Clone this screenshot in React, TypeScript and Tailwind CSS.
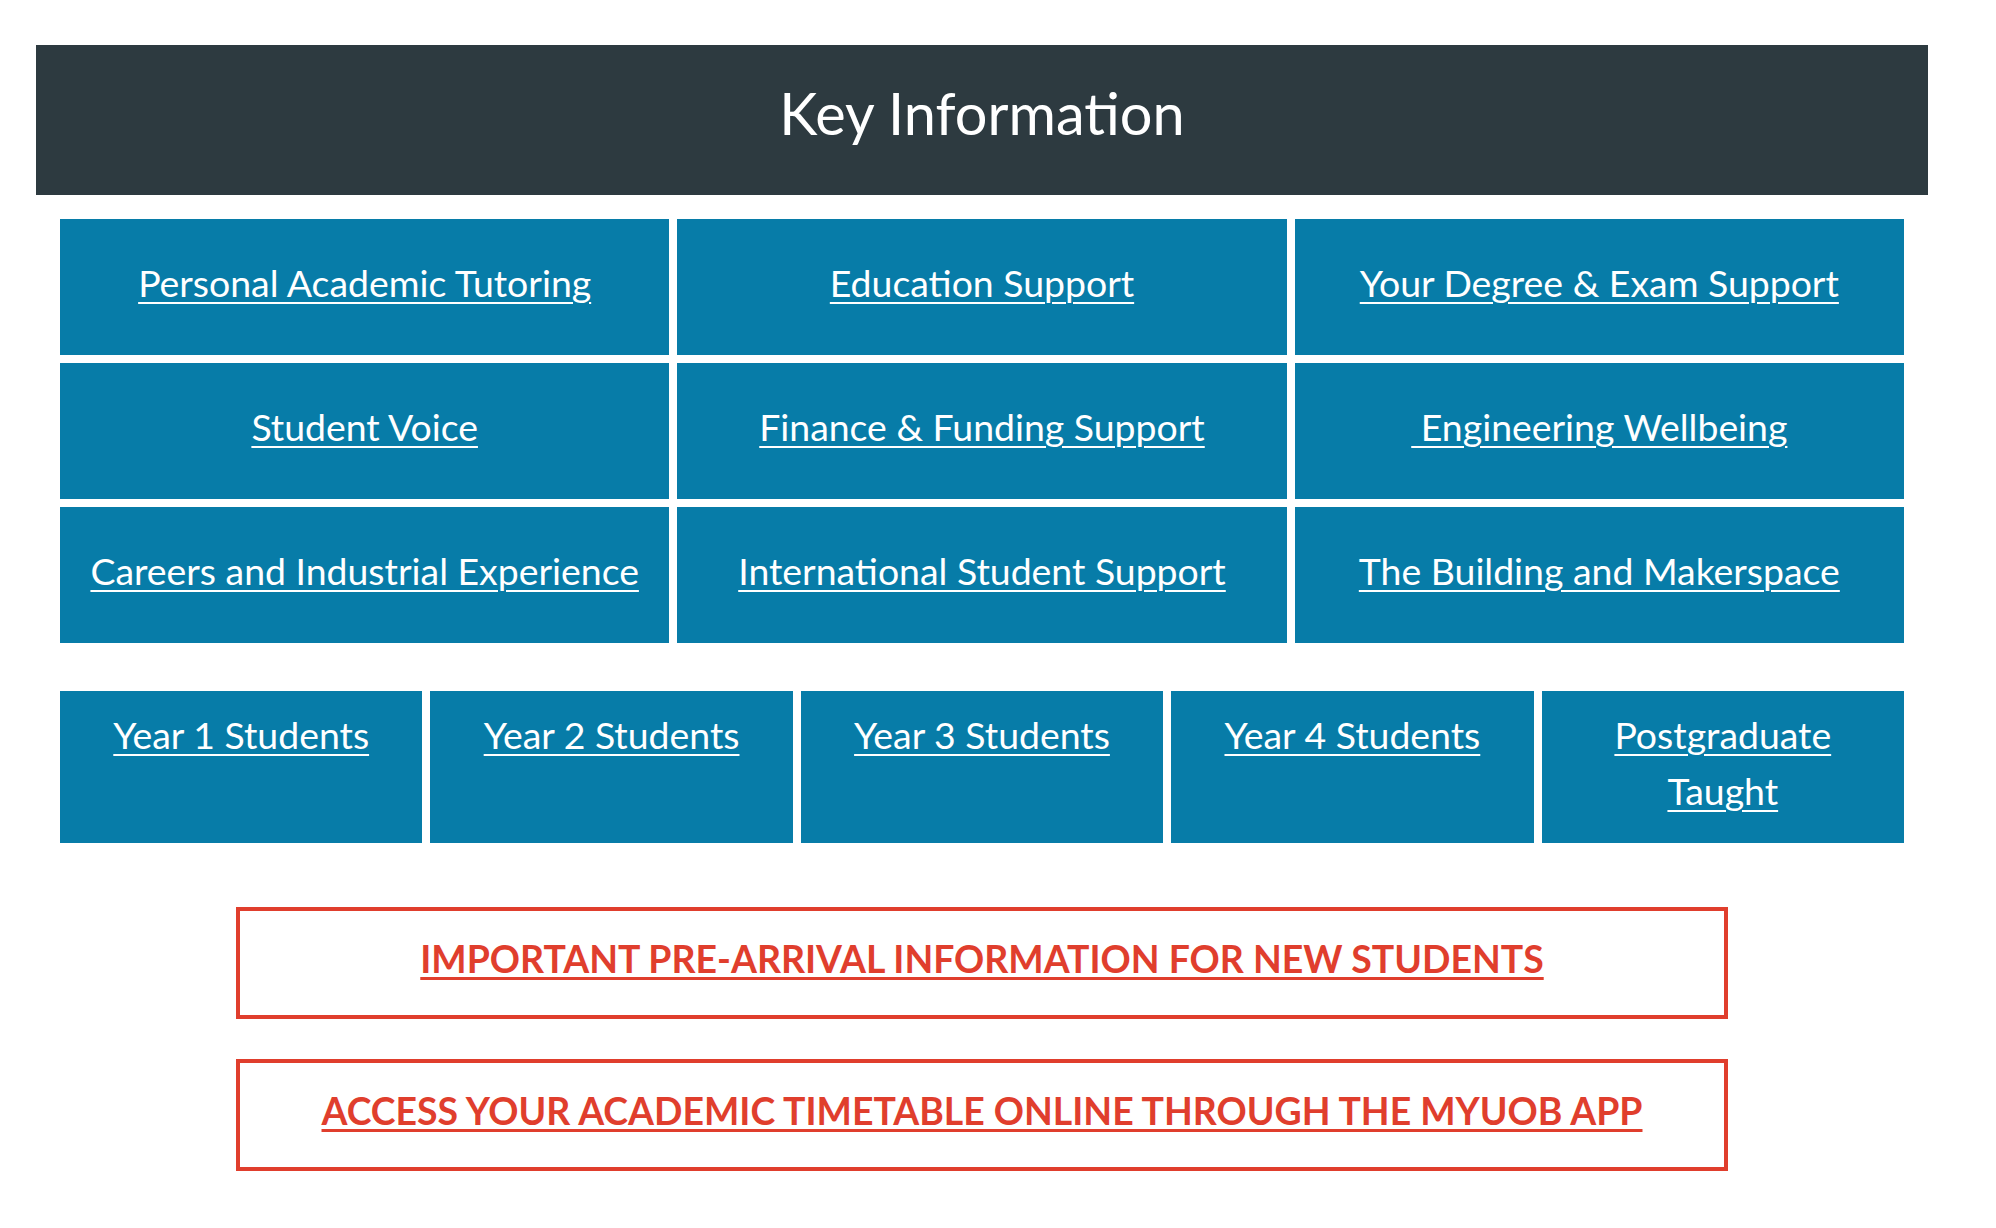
import React from "react";

const topLinks = [
  "Personal Academic Tutoring",
  "Education Support",
  "Your Degree & Exam Support",
  "Student Voice",
  "Finance & Funding Support",
  "\u00a0Engineering Wellbeing",
  "Careers and Industrial Experience",
  "International Student Support",
  "The Building and Makerspace",
];

const yearLinks = [
  "Year 1 Students",
  "Year 2 Students",
  "Year 3 Students",
  "Year 4 Students",
  "Postgraduate Taught",
];

export default function App() {
  return (
    <div
      className="min-h-screen w-full bg-white pt-[45px] pb-[57px]"
      style={{ fontFamily: "Lato, 'Open Sans', sans-serif" }}
    >
      <div className="ml-[36px] w-[1892px]">
        <div className="h-[150px] bg-[#2d3a40] pt-[39px] text-center">
          <h2 className="text-[57.7px] leading-none font-normal text-white">
            Key Information
          </h2>
        </div>

        <div className="mx-[24px] mt-[24px] grid grid-cols-3 gap-2">
          {topLinks.map((t) => (
            <div
              key={t}
              className="flex h-[136px] items-center justify-center bg-[#077ca8] pb-[8px] text-center"
            >
              <a
                href="#"
                className="text-[37.4px] leading-normal text-white underline decoration-2 underline-offset-[5px]"
              >
                {t}
              </a>
            </div>
          ))}
        </div>

        <div className="mx-[24px] mt-[48px] grid grid-cols-5 gap-2">
          {yearLinks.map((t) => (
            <div
              key={t}
              className="h-[152px] bg-[#077ca8] px-[40px] pt-[16px] text-center"
            >
              <a
                href="#"
                className="text-[37.4px] leading-[56px] text-white underline decoration-2 underline-offset-[5px]"
              >
                {t}
              </a>
            </div>
          ))}
        </div>

        <div className="mx-auto mt-[64px] flex h-[112px] w-[1492px] items-center justify-center border-4 border-[#e03e2d] pb-[8px]">
          <a
            href="#"
            className="text-[37.4px] leading-normal font-bold text-[#e03e2d] underline decoration-[3px] underline-offset-[4px]"
          >
            IMPORTANT PRE-ARRIVAL INFORMATION FOR NEW STUDENTS
          </a>
        </div>

        <div className="mx-auto mt-[40px] flex h-[112px] w-[1492px] items-center justify-center border-4 border-[#e03e2d] pb-[8px]">
          <a
            href="#"
            className="text-[37.4px] leading-normal font-bold text-[#e03e2d] underline decoration-[3px] underline-offset-[4px]"
          >
            ACCESS YOUR ACADEMIC TIMETABLE ONLINE THROUGH THE MYUOB APP
          </a>
        </div>
      </div>
    </div>
  );
}
